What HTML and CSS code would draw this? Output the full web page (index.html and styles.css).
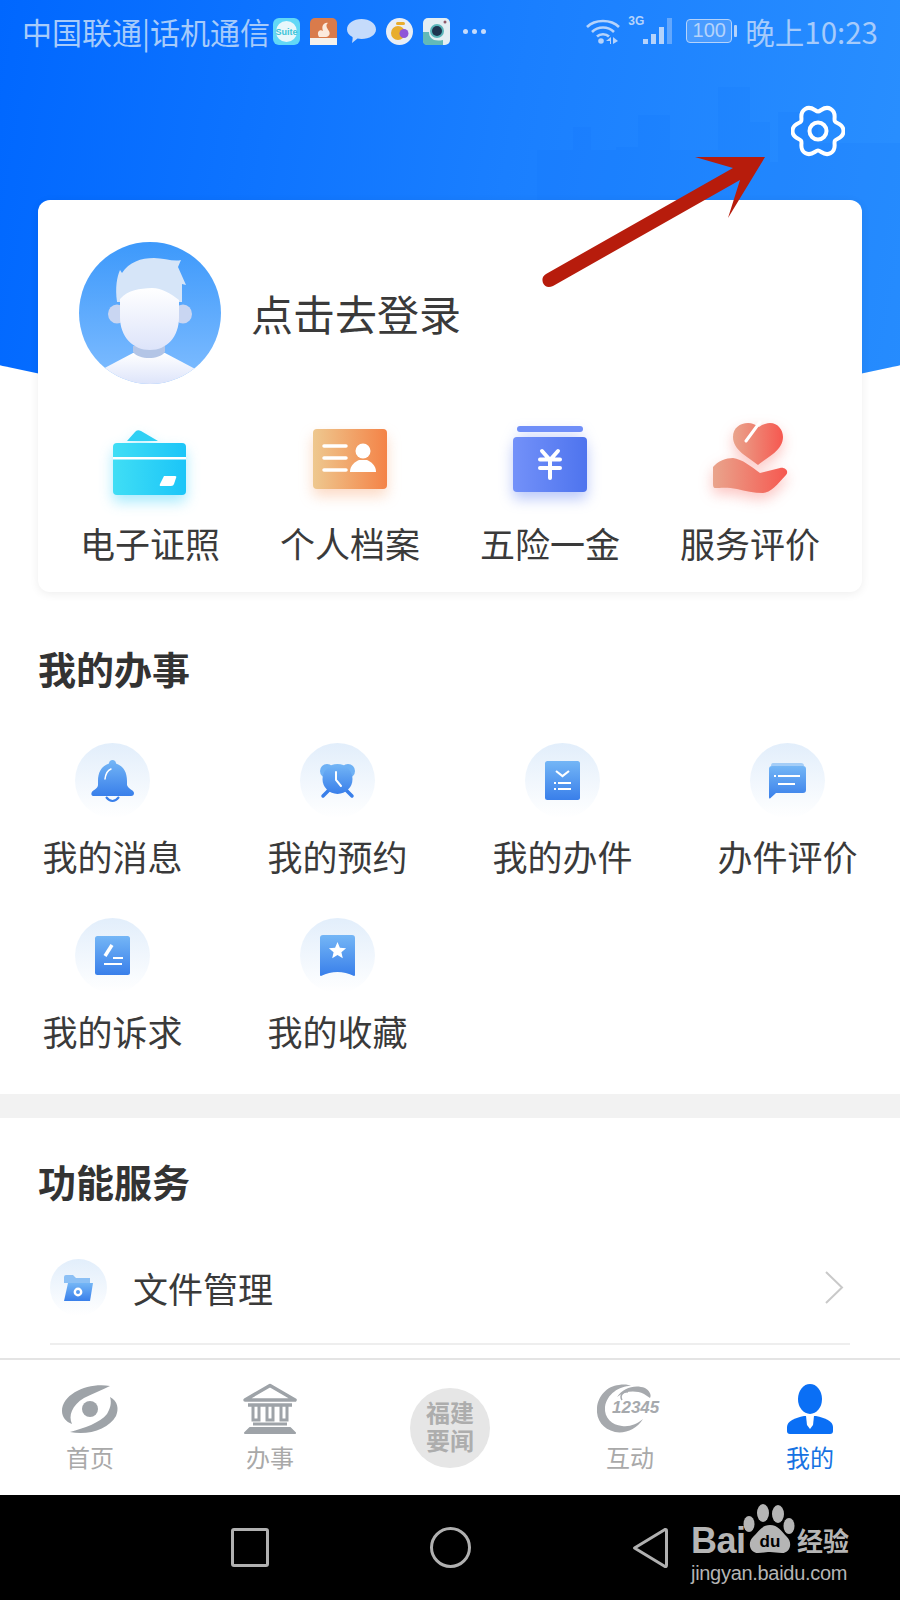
FILE: index.html
```html
<!DOCTYPE html>
<html lang="zh">
<head>
  <meta charset="utf-8">
  <title>我的</title>
  <link rel="stylesheet" href="styles.css">
</head>
<body>
  <svg class="svg-defs" aria-hidden="true">
    <defs>
      <linearGradient id="blueIcon" x1="0" y1="0" x2="0" y2="1"><stop offset="0" stop-color="#74b6f6"/><stop offset="1" stop-color="#397fea"/></linearGradient>
      <linearGradient id="avatarBg" x1="0" y1="0" x2="0" y2="1"><stop offset="0" stop-color="#3d99fb"/><stop offset="1" stop-color="#80bdff"/></linearGradient>
      <linearGradient id="avatarSkin" x1="0" y1="0" x2="0" y2="1"><stop offset="0" stop-color="#ffffff"/><stop offset="1" stop-color="#dde4fa"/></linearGradient>
      <linearGradient id="cyanCard" x1="0" y1="0" x2="1" y2="0"><stop offset="0" stop-color="#40def5"/><stop offset="1" stop-color="#1bc5f8"/></linearGradient>
      <linearGradient id="orangeCard" x1="0" y1="0" x2="1" y2="0"><stop offset="0" stop-color="#eec88f"/><stop offset="1" stop-color="#f48347"/></linearGradient>
      <linearGradient id="indigoCard" x1="0" y1="0" x2="1" y2="0"><stop offset="0" stop-color="#7391f9"/><stop offset="1" stop-color="#4e74ee"/></linearGradient>
      <linearGradient id="redHand" x1="0" y1="0" x2="1" y2="0"><stop offset="0" stop-color="#e9a48c"/><stop offset="1" stop-color="#f65850"/></linearGradient>
    </defs>
  </svg>

  <div class="page">
    <div class="content">
      <div class="hero-bg">
        <svg class="skyline" width="900" height="400" viewBox="0 0 900 400">
          <path d="M537 400V150H573V127H591V150H616V147H638V115H670V150H695V150H718V87H750V122H770V162H778V112H818V143H845V143H900V400Z" fill="#0a6df5" opacity="0.1"/>
        </svg>
      </div>

      <div class="status-bar">
        <div class="status-left">
          <span class="status-text status-carrier">中国联通|话机通信</span>
          <svg class="status-app" width="27" height="27" viewBox="0 0 27 27"><rect width="27" height="27" rx="6" fill="#62d8f6"/><circle cx="13.500" cy="13.500" r="10.500" fill="#e8f7fb"/><text x="13.500" y="17" class="suite-text">Suite</text></svg>
          <svg class="status-app" width="27" height="27" viewBox="0 0 27 27"><rect width="27" height="27" rx="5" fill="#d97b4b"/><rect y="20" width="27" height="7" fill="#f4f1ec"/><path d="M9 19C6 14 10 11 13 13C11 8 14 4 18 5C15 7 17 10 19 13C21 17 18 19 15 19Z" fill="#fbeadd"/></svg>
          <svg class="status-app" width="29" height="27" viewBox="0 0 29 27"><path d="M14.500 1C22.500 1 29 5.500 29 11.500C29 17 22.500 21 14.500 21C13 21 11.800 21 10.500 20.600L5 25C5 25 6 20.500 5.500 19C2 17 0 14.500 0 11.500C0 5.500 6.500 1 14.500 1Z" fill="#c5dbfb"/></svg>
          <svg class="status-app" width="27" height="27" viewBox="0 0 27 27"><circle cx="13.500" cy="13.500" r="13.500" fill="#e9eef5"/><circle cx="12" cy="15" r="7" fill="#e8ad2c"/><circle cx="18" cy="15.500" r="4.500" fill="#8e55d8"/><rect x="10" y="4" width="9" height="3" rx="1.500" fill="#e8ad2c"/></svg>
          <svg class="status-app" width="27" height="27" viewBox="0 0 27 27"><rect width="27" height="27" rx="5" fill="#e3eef3"/><path d="M0 14H6C6 20 10 24 20 22V27H4Q0 27 0 23Z" fill="#62b9b8"/><circle cx="14" cy="13" r="7" fill="#5cb6ba"/><circle cx="14" cy="13" r="5" fill="#1f3550"/><circle cx="22" cy="4" r="1.500" fill="#8e5a6a"/></svg>
          <span class="status-more"><i></i><i></i><i></i></span>
        </div>
        <div class="status-right">
          <svg width="34" height="27" viewBox="0 0 34 27" class="status-wifi">
            <path d="M1 9C9 1 25 1 33 9" fill="none" stroke="#b5d3fb" stroke-width="2.600"/>
            <path d="M6 14C12 8 22 8 28 14" fill="none" stroke="#b5d3fb" stroke-width="2.600"/>
            <path d="M11 18.500C14 15.500 20 15.500 23 18.500" fill="none" stroke="#b5d3fb" stroke-width="2.600"/>
            <circle cx="15" cy="23" r="2.800" fill="#b5d3fb"/>
            <path d="M20 23L25 19V26H24V23ZM27 19V26L32 23Z" fill="#b5d3fb"/>
          </svg>
          <div class="signal">
            <span class="signal-type">3G</span>
            <svg width="29" height="28" viewBox="0 0 29 28">
              <rect x="0" y="22" width="5" height="5" fill="#b5d3fb"/>
              <rect x="8" y="17" width="5" height="10" fill="#b5d3fb"/>
              <rect x="16" y="10" width="5" height="17" fill="#b5d3fb"/>
              <rect x="24" y="1" width="5" height="26" fill="#b5d3fb" opacity="0.45"/>
            </svg>
          </div>
          <div class="battery"><span class="battery-body">100</span><i class="battery-cap"></i></div>
          <span class="status-text status-time">晚上10:23</span>
        </div>
      </div>

      <div class="settings-row">
        <svg class="gear" width="54" height="54" viewBox="0 0 54 54" fill="none" stroke="#fff" stroke-width="4">
          <path d="M52.500 27C52.500 34.500 45.390 34.150 43.890 36.750C42.390 39.350 46.250 45.330 39.750 49.080C33.250 52.830 30 46.500 27 46.500C24 46.500 20.750 52.830 14.250 49.080C7.750 45.330 11.610 39.350 10.110 36.750C8.610 34.150 1.500 34.500 1.500 27C1.500 19.500 8.610 19.850 10.110 17.250C11.610 14.650 7.750 8.670 14.250 4.920C20.750 1.170 24 7.500 27 7.500C30 7.500 33.250 1.170 39.750 4.920C46.250 8.670 42.390 14.650 43.890 17.250C45.390 19.850 52.500 19.500 52.500 27Z"/>
          <circle cx="27" cy="27" r="8.500"/>
        </svg>
      </div>

      <section class="user-card">
        <div class="user-row">
          <svg class="avatar" width="142" height="142" viewBox="0 0 142 142">
            <clipPath id="avatarClip"><circle cx="71" cy="71" r="71"/></clipPath>
            <g clip-path="url(#avatarClip)">
              <rect width="142" height="142" fill="url(#avatarBg)"/>
              <path d="M18 142V130L54 111H86L122 130V142Z" fill="url(#avatarSkin)"/>
              <path d="M54 104H86V110C80 118 60 118 54 110Z" fill="#b3c5e6"/>
              <ellipse cx="38" cy="72" rx="9" ry="9.500" fill="#c9d6f2"/>
              <ellipse cx="104" cy="72" rx="9" ry="9.500" fill="#c9d6f2"/>
              <path d="M38 60C36 45 38 35 41 28L43 31C50 20 62 16 75 16C85 16 95 20 102 18L99 25L107 43L103 42L103 60Z" fill="#d6e5f8"/>
              <path d="M41 57C50 47 60 47 73 46C83 46 92 52 100 58V75C100 95 88 108 71 108C54 108 41 95 41 75Z" fill="url(#avatarSkin)"/>
            </g>
          </svg>
          <span class="login-text">点击去登录</span>
        </div>
        <div class="quick-row">
          <div class="quick-item">
            <svg class="quick-icon shadow-cyan" width="80" height="74" viewBox="0 0 80 74">
              <path d="M17 17L25 8Q27 5 31 7L48 17Z" fill="#2fd0f4"/>
              <rect x="3" y="19" width="73" height="52" rx="4" fill="url(#cyanCard)"/>
              <rect x="3" y="33" width="73" height="2.500" fill="#fff"/>
              <path d="M54 52H65Q67 52 66 54L64 60Q63.500 62 61 62H51Q49 62 50 60Z" fill="#fff"/>
            </svg>
            <span class="quick-label">电子证照</span>
          </div>
          <div class="quick-item">
            <svg class="quick-icon shadow-orange" width="80" height="74" viewBox="0 0 80 74">
              <rect x="3" y="5" width="74" height="60" rx="4" fill="url(#orangeCard)"/>
              <path d="M14 22H36M14 34H36M14 46H36" stroke="#fff" stroke-width="3.500" stroke-linecap="round"/>
              <circle cx="53" cy="27" r="7.500" fill="#fff"/>
              <path d="M40 48C40 41 45 38 49 36H57C61 38 66 41 66 48Z" fill="#fff"/>
            </svg>
            <span class="quick-label">个人档案</span>
          </div>
          <div class="quick-item">
            <svg class="quick-icon shadow-indigo" width="80" height="74" viewBox="0 0 80 74">
              <rect x="7" y="2" width="66" height="6" rx="3" fill="#6f8ef8"/>
              <rect x="3" y="13" width="74" height="55" rx="4" fill="url(#indigoCard)"/>
              <path d="M32 27L40 36L48 27M30 35.500H50M30 44H50M40 36V54" fill="none" stroke="#fff" stroke-width="4" stroke-linecap="round"/>
            </svg>
            <span class="quick-label">五险一金</span>
          </div>
          <div class="quick-item">
            <svg class="quick-icon shadow-red" width="80" height="74" viewBox="0 0 80 74">
              <path d="M48 41C38 33 23 26 23 13C23 4 30 -1 38 -1C42 -1 46 1 49 3C53 0 57 -1 60 -1C68 -1 73 6 73 13C73 26 58 33 48 41Z" fill="url(#redHand)"/>
              <path d="M36 17L50 -2" stroke="#fff" stroke-width="3" stroke-linecap="round"/>
              <path d="M3 43C8 37 16 34 23 34C32 35 42 43 50 49L70 44C76 43 79 48 76 51C68 60 60 69 53 69C44 69 35 67 27 65C18 63 10 64 5 64Q3 64 3 60Z" fill="url(#redHand)"/>
            </svg>
            <span class="quick-label">服务评价</span>
          </div>
        </div>
      </section>

      <h2 class="section-title title-work">我的办事</h2>
      <div class="work-grid">
        <div class="work-item">
          <div class="soft-circle">
            <svg width="75" height="75" viewBox="0 0 75 75">
              <path d="M31 54Q37.500 62 44 54" fill="none" stroke="#397fea" stroke-width="2"/>
              <path d="M37.500 17C39.500 17 41 18.500 41 20.500C49 23 52 30 52 38V42C53 46 59 47 59 50C59 52 58 53 56 53H19C17 53 16 52 16.500 50C17 47 23 46 23 42V38C23 30 26 23 34 20.500C34 18.500 35.500 17 37.500 17Z" fill="url(#blueIcon)"/>
              <path d="M30 36Q31 28 36 26" fill="none" stroke="#fff" stroke-width="1.500" stroke-linecap="round"/>
            </svg>
          </div>
          <span class="work-label">我的消息</span>
        </div>
        <div class="work-item">
          <div class="soft-circle">
            <svg width="75" height="75" viewBox="0 0 75 75">
              <path d="M23 53L29 47M52 53L46 47" stroke="#397fea" stroke-width="3.500" stroke-linecap="round"/>
              <circle cx="27" cy="28" r="7" fill="#6eb1f5"/>
              <circle cx="48" cy="28" r="7" fill="#6eb1f5"/>
              <circle cx="37.500" cy="36" r="15" fill="url(#blueIcon)"/>
              <path d="M36 29V37L41 43" fill="none" stroke="#fff" stroke-width="2" stroke-linecap="round"/>
            </svg>
          </div>
          <span class="work-label">我的预约</span>
        </div>
        <div class="work-item">
          <div class="soft-circle">
            <svg width="75" height="75" viewBox="0 0 75 75">
              <rect x="20" y="18" width="35" height="39" rx="2.500" fill="url(#blueIcon)"/>
              <path d="M31 28L37.500 33L44 28" fill="none" stroke="#fff" stroke-width="2.200"/>
              <path d="M29 40H31M33 40H46M29 46H31M33 46H46" stroke="#fff" stroke-width="1.800"/>
            </svg>
          </div>
          <span class="work-label">我的办件</span>
        </div>
        <div class="work-item">
          <div class="soft-circle">
            <svg width="75" height="75" viewBox="0 0 75 75">
              <path d="M23 20H51Q54 20 54 23H21Q21 20 23 20Z" fill="#a4cdf7"/>
              <path d="M22 23H53Q56 23 56 26V47Q56 50 53 50H26L20 55.500Q19 56 19 54V26Q19 23 22 23Z" fill="url(#blueIcon)"/>
              <path d="M24 33H26M28 33H50M28 41H45" stroke="#fff" stroke-width="2"/>
            </svg>
          </div>
          <span class="work-label">办件评价</span>
        </div>
        <div class="work-item">
          <div class="soft-circle">
            <svg width="75" height="75" viewBox="0 0 75 75">
              <rect x="20" y="18" width="35" height="39" rx="2.500" fill="url(#blueIcon)"/>
              <path d="M37 27L30 38" stroke="#fff" stroke-width="3.500"/>
              <path d="M38 40H48M29 46H47" stroke="#fff" stroke-width="2"/>
            </svg>
          </div>
          <span class="work-label">我的诉求</span>
        </div>
        <div class="work-item">
          <div class="soft-circle">
            <svg width="75" height="75" viewBox="0 0 75 75">
              <path d="M20 20Q20 17 23 17H52Q55 17 55 20V57Q55 58 54 58Q37.500 50 21 58Q20 58 20 57Z" fill="url(#blueIcon)"/>
              <path d="M37.500 24L39.900 29.800L46.100 30.200L41.400 34.200L42.800 40.300L37.500 37L32.200 40.300L33.600 34.200L28.900 30.200L35.100 29.800Z" fill="#fff"/>
            </svg>
          </div>
          <span class="work-label">我的收藏</span>
        </div>
      </div>

      <div class="band"></div>

      <h2 class="section-title title-service">功能服务</h2>
      <div class="service-row">
        <div class="soft-circle soft-circle-small">
          <svg width="57" height="57" viewBox="0 0 57 57">
            <path d="M14 18Q14 16 16 16H23L26 19H40V24H14Z" fill="#8cc0f5"/>
            <path d="M18 24H43L40 42H14Z" fill="url(#blueIcon)"/>
            <circle cx="28" cy="33" r="3.200" fill="none" stroke="#fff" stroke-width="2.400"/>
          </svg>
        </div>
        <span class="service-label">文件管理</span>
        <svg class="chevron" width="20" height="33" viewBox="0 0 20 33"><path d="M2 1L18 16.500L2 32" fill="none" stroke="#c9c9c9" stroke-width="2"/></svg>
      </div>
    </div>

    <nav class="tab-bar">
      <div class="tab">
        <svg class="tab-icon" width="60" height="52" viewBox="0 0 60 52" fill="#9ea3a8">
          <path d="M50 3C30 -1 2 10 2 28C2 34 6 39 12 41C8 33 12 22 24 15C32 11 42 7 50 3Z"/>
          <path d="M50 14C58 18 59 26 56 33C49 46 28 53 10 49C24 45 40 40 47 31C50 26 52 20 50 14Z"/>
          <circle cx="30" cy="26" r="8"/>
        </svg>
        <span class="tab-label">首页</span>
      </div>
      <div class="tab">
        <svg class="tab-icon" width="60" height="52" viewBox="0 0 60 52" fill="none" stroke="#9ea3a8">
          <path d="M5 17L30 2.500L55 17Z" stroke-width="3.500" stroke-linejoin="round"/>
          <path d="M8 22H52" stroke-width="3.500"/>
          <path d="M13 23V37H19V23M27 23V37H33V23M41 23V37H47V23" stroke-width="3"/>
          <path d="M13 41H47" stroke-width="3"/>
          <path d="M10 45H50L55 50H5Z" fill="#9ea3a8" stroke-width="2" stroke-linejoin="round"/>
        </svg>
        <span class="tab-label">办事</span>
      </div>
      <div class="tab tab-news">
        <div class="news-badge">福建<br>要闻</div>
      </div>
      <div class="tab">
        <svg class="tab-icon" width="70" height="52" viewBox="0 0 70 52" fill="#a6a9ad">
          <path d="M48 36C42 46 30 51 20 49C8 46 1 37 2 25C3 13 12 3 24 2C30 1 34 2 36 3C24 3 12 11 10 24C9 35 17 42 27 43C35 44 42 41 48 36Z"/>
          <path d="M22 14C28 5 40 1 50 5C54 7 57 12 55 15L49 11C40 7 30 8 22 14Z"/>
          <path d="M27 17C24 12 29 8 33 9" fill="none" stroke="#a6a9ad" stroke-width="1.500"/>
          <text x="17" y="30" class="hotline-text">12345</text>
        </svg>
        <span class="tab-label">互动</span>
      </div>
      <div class="tab">
        <svg class="tab-icon" width="60" height="52" viewBox="0 0 60 52">
          <ellipse cx="30" cy="16" rx="12" ry="15" fill="#0a6ff5"/>
          <path d="M7 48V44C7 38 15 35 24 33H36C45 35 53 38 53 44V48Q53 51 50 51H10Q7 51 7 48Z" fill="#0a6ff5"/>
          <path d="M26 33H34L33 42L30 46L27 42Z" fill="#fff"/>
        </svg>
        <span class="tab-label tab-label-active">我的</span>
      </div>
    </nav>

    <div class="nav-bar">
      <div class="nav-slot"><span class="nav-square"></span></div>
      <div class="nav-slot"><span class="nav-circle"></span></div>
      <div class="nav-slot">
        <svg width="36" height="42" viewBox="0 0 36 42"><path d="M33 2.500L2.500 21L33 39.500Q34.500 40 34.500 38V4Q34.500 2 33 2.500Z" fill="none" stroke="#b0b0b0" stroke-width="3" stroke-linejoin="round"/></svg>
      </div>
    </div>

    <!-- arrow drawn on top of the screenshot -->
    <svg class="red-arrow" width="280" height="140" viewBox="0 0 280 140">
      <path d="M195 7H265L228 68L240 30L53 136Q46 139 43 133Q41 127 46 124L233 18Z" fill="#b71c0c"/>
    </svg>

    <div class="watermark">
      <div class="watermark-top">
        <span class="wm-bai">Bai</span>
        <svg class="wm-paw" width="52" height="52" viewBox="0 0 52 52" fill="#b5b5b5">
          <ellipse cx="2" cy="20" rx="5.500" ry="8"/>
          <ellipse cx="16" cy="9" rx="6" ry="9"/>
          <ellipse cx="31" cy="10" rx="6" ry="9"/>
          <ellipse cx="42" cy="22" rx="5.500" ry="8"/>
          <path d="M23 21C31 21 34 27 40 33C46 39 43 49 35 49C30 49 27 48 23 48C19 48 16 49 11 49C3 49 0 39 6 33C12 27 15 21 23 21Z"/>
          <text x="23" y="43" class="wm-du">du</text>
        </svg>
        <span class="wm-jy">经验</span>
      </div>
      <div class="wm-url">jingyan.baidu.com</div>
    </div>
  </div>
</body>
</html>
```

FILE: styles.css
```css
* {
  box-sizing: border-box;
}

body {
  margin: 0;
  background: #fff;
  font-family: "Noto Sans CJK SC", "Liberation Sans", sans-serif;
  color: #3a3a3a;
}

.svg-defs {
  position: absolute;
  width: 0;
  height: 0;
}

.page {
  position: relative;
  width: 900px;
  height: 1600px;
  overflow: hidden;
  display: flex;
  flex-direction: column;
}

.content {
  position: relative;
  height: 1358px;
  overflow: hidden;
}

.hero-bg {
  position: absolute;
  left: 0;
  top: 0;
  width: 900px;
  height: 420px;
  background: linear-gradient(100deg, #0067ff 0%, #1a7fff 55%, #2a90ff 100%);
  clip-path: ellipse(800px 270px at 50% 142px);
}

.skyline {
  display: block;
}

/* status bar */
.status-bar {
  position: relative;
  height: 62px;
  display: flex;
  justify-content: space-between;
  align-items: center;
  padding: 0 22px;
}

.status-left,
.status-right {
  display: flex;
  align-items: center;
}

.status-text {
  font-size: 29.5px;
  line-height: 36px;
  color: #a6cbfb;
}

.status-carrier {
  font-size: 30px;
}

.status-app {
  margin-left: 10px;
}

.status-carrier + .status-app {
  margin-left: 3px;
}

.suite-text {
  font-family: "Liberation Sans", sans-serif;
  font-size: 9px;
  font-weight: bold;
  fill: #3cc4d8;
  text-anchor: middle;
}

.status-more {
  display: flex;
  gap: 4px;
  margin-left: 13px;
}

.status-more i {
  width: 5px;
  height: 5px;
  border-radius: 50%;
  background: #c5dbfb;
}

.status-wifi {
  margin-right: 8px;
}

.signal {
  position: relative;
  width: 44px;
  height: 28px;
  display: flex;
  justify-content: flex-end;
}

.signal-type {
  position: absolute;
  left: 0;
  top: -3px;
  font-family: "Liberation Sans", sans-serif;
  font-size: 12px;
  font-weight: bold;
  line-height: 14px;
  color: #b5d3fb;
}

.battery {
  display: flex;
  align-items: center;
  margin-left: 14px;
  margin-right: 8px;
}

.battery-body {
  width: 46px;
  height: 24px;
  border: 1.5px solid #b5d3fb;
  border-radius: 4px;
  background: rgba(255, 255, 255, 0.18);
  font-family: "Liberation Sans", sans-serif;
  font-size: 20px;
  line-height: 21px;
  text-align: center;
  color: #b5d3fb;
}

.battery-cap {
  width: 3px;
  height: 12px;
  margin-left: 2px;
  border-radius: 1px;
  background: #b5d3fb;
}

/* settings */
.settings-row {
  position: relative;
  display: flex;
  justify-content: flex-end;
  padding: 42px 55px 42px 0;
}

.gear {
  display: block;
}

/* user card */
.user-card {
  position: relative;
  width: 824px;
  height: 392px;
  margin-left: 38px;
  padding-top: 42px;
  background: #fff;
  border-radius: 12px;
  box-shadow: 0 2px 10px rgba(0, 0, 0, 0.07);
}

.user-row {
  display: flex;
  align-items: center;
  padding-left: 41px;
}

.login-text {
  margin-left: 30px;
  font-size: 42px;
  line-height: 50px;
}

.quick-row {
  display: grid;
  grid-template-columns: repeat(4, 200px);
  padding: 40px 12px 0;
}

.quick-item {
  display: flex;
  flex-direction: column;
  align-items: center;
}

.quick-icon {
  display: block;
  overflow: visible;
}

.shadow-cyan {
  filter: drop-shadow(0 7px 7px rgba(40, 205, 250, 0.4));
}

.shadow-orange {
  filter: drop-shadow(0 7px 7px rgba(245, 150, 90, 0.35));
}

.shadow-indigo {
  filter: drop-shadow(0 7px 7px rgba(85, 120, 240, 0.4));
}

.shadow-red {
  filter: drop-shadow(0 6px 7px rgba(246, 90, 80, 0.35));
}

.quick-label {
  margin-top: 25px;
  font-size: 35px;
  line-height: 40px;
}

/* sections */
.section-title {
  margin: 0;
  padding-left: 38px;
  font-size: 38px;
  line-height: 50px;
  font-weight: bold;
  color: #333;
}

.title-work {
  margin-top: 51px;
}

.title-service {
  margin-top: 38px;
}

.work-grid {
  display: grid;
  grid-template-columns: repeat(4, 225px);
  row-gap: 42px;
  margin-top: 50px;
}

.work-item {
  display: flex;
  flex-direction: column;
  align-items: center;
}

.soft-circle {
  width: 75px;
  height: 75px;
  flex-shrink: 0;
  border-radius: 50%;
  background: linear-gradient(#e2eefb, #ffffff);
}

.soft-circle svg {
  display: block;
}

.soft-circle-small {
  width: 57px;
  height: 57px;
}

.work-label {
  margin-top: 18px;
  font-size: 35px;
  line-height: 40px;
}

.band {
  height: 24px;
  margin-top: 43px;
  background: #f2f2f2;
}

.service-row {
  display: flex;
  align-items: center;
  margin: 53px 50px 0;
  padding-bottom: 27px;
  border-bottom: 2px solid #eeeeee;
}

.service-label {
  margin-left: 26px;
  font-size: 35px;
  line-height: 57px;
}

.chevron {
  margin-left: auto;
  margin-right: 6px;
}

/* bottom tabs */
.tab-bar {
  height: 137px;
  display: grid;
  grid-template-columns: repeat(5, 180px);
  border-top: 2px solid #e4e4e4;
  background: #fff;
}

.tab {
  display: flex;
  flex-direction: column;
  align-items: center;
  padding-top: 23px;
}

.tab-icon {
  display: block;
  overflow: visible;
}

.tab-label {
  margin-top: 6px;
  font-size: 24px;
  line-height: 32px;
  color: #a9a9a9;
}

.tab-label-active {
  color: #1672e2;
}

.tab-news {
  padding-top: 28px;
}

.news-badge {
  width: 80px;
  height: 80px;
  padding-top: 12px;
  border-radius: 50%;
  background: #e6e6e6;
  font-family: "Liberation Serif", "Noto Sans CJK SC", serif;
  font-size: 24px;
  font-weight: bold;
  line-height: 28px;
  text-align: center;
  color: #adadad;
}

.hotline-text {
  font-family: "Liberation Sans", sans-serif;
  font-size: 17px;
  font-weight: bold;
  font-style: italic;
}

/* android nav */
.nav-bar {
  height: 105px;
  display: grid;
  grid-template-columns: repeat(3, 200px);
  justify-content: center;
  align-items: center;
  background: #000;
}

.nav-slot {
  display: flex;
  justify-content: center;
  align-items: center;
}

.nav-square {
  width: 38px;
  height: 39px;
  border: 3px solid #b0b0b0;
  border-radius: 3px;
}

.nav-circle {
  width: 41px;
  height: 41px;
  border: 3px solid #b0b0b0;
  border-radius: 50%;
}

/* things lying over the page */
.red-arrow {
  position: absolute;
  left: 500px;
  top: 150px;
  overflow: visible;
}

.watermark {
  position: absolute;
  left: 691px;
  top: 1504px;
  width: 165px;
  color: #b5b5b5;
}

.watermark-top {
  display: flex;
  align-items: flex-end;
  height: 52px;
}

.wm-bai {
  width: 56px;
  font-family: "Liberation Sans", sans-serif;
  font-size: 36px;
  font-weight: bold;
  line-height: 30px;
  letter-spacing: -0.5px;
}

.wm-paw {
  display: block;
  flex-shrink: 0;
  overflow: visible;
}

.wm-du {
  font-family: "Liberation Sans", sans-serif;
  font-size: 17px;
  font-weight: bold;
  fill: #000;
  text-anchor: middle;
}

.wm-jy {
  margin-left: -2px;
  font-size: 26px;
  font-weight: bold;
  line-height: 32px;
  white-space: nowrap;
}

.wm-url {
  margin-top: 5px;
  font-family: "Liberation Sans", sans-serif;
  font-size: 20px;
  letter-spacing: -0.3px;
  line-height: 24px;
  white-space: nowrap;
}
```
